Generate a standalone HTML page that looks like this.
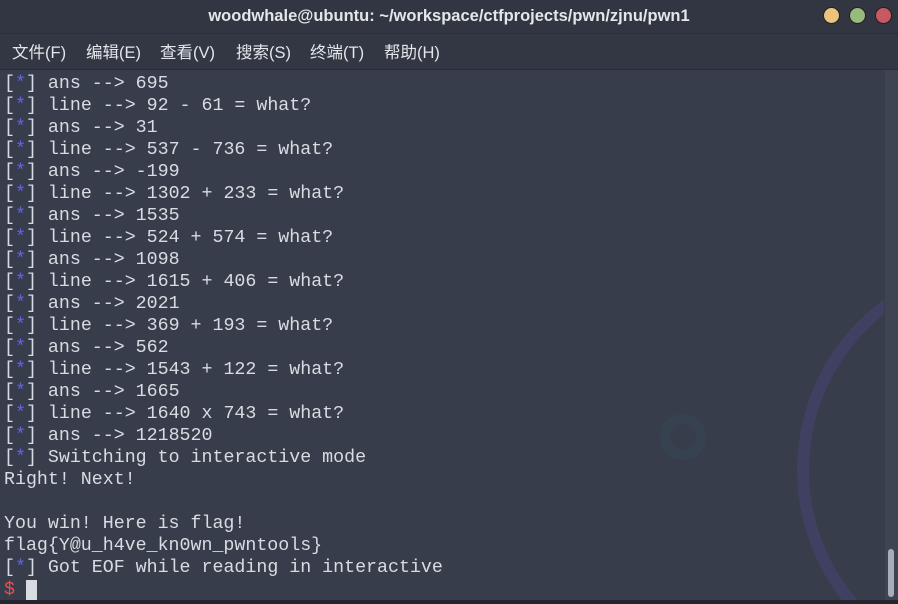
<!DOCTYPE html>
<html><head><meta charset="utf-8"><style>
body{margin:0;width:898px;height:604px;overflow:hidden;background:#383d4b;position:relative;font-family:"Liberation Sans","Noto Sans CJK SC",sans-serif}
#title{position:absolute;left:0;top:0;width:898px;height:33px;background:#313642;border-bottom:1px solid #2a2e38;color:#e3e6ea;font-weight:bold;font-size:16.5px;text-align:center;line-height:32px}
.dot{position:absolute;top:7px;width:15px;height:15px;border-radius:50%;border:1px solid #222}
#menu{position:absolute;left:0;top:34px;width:898px;height:35px;background:#323743;border-bottom:1px solid #2a2e38;color:#e3e6ea;font-size:16.5px;line-height:38px}
#menu span{position:absolute}
#term{position:absolute;left:0;top:70px;width:884px;height:530px;overflow:hidden}
pre{margin:0;position:absolute;left:4px;top:3px;font-family:"Liberation Mono",monospace;font-size:18.3px;line-height:22px;color:#d8dce2}
b{font-weight:normal;color:#6464f2}
.r{color:#ef4b4b}
#sb{position:absolute;left:885px;top:70px;width:13px;height:530px;background:#3f4453}
#thumb{position:absolute;left:888px;top:549px;width:6px;height:48px;border-radius:3px;background:#a7adb9}
#bot{position:absolute;left:0;top:600px;width:898px;height:4px;background:#23262e}
</style></head><body>
<div id="title">woodwhale@ubuntu: ~/workspace/ctfprojects/pwn/zjnu/pwn1</div>
<div class="dot" style="left:823px;background:#e9c57e"></div>
<div class="dot" style="left:849px;background:#98bb7c"></div>
<div class="dot" style="left:875px;background:#c65a62"></div>
<div id="menu"><span style="left:12px">文件(F)</span><span style="left:86px">编辑(E)</span><span style="left:160px">查看(V)</span><span style="left:236px">搜索(S)</span><span style="left:310px">终端(T)</span><span style="left:384px">帮助(H)</span></div>
<div id="term">
<svg width="884" height="530" style="position:absolute;left:0;top:0">
<circle cx="1008" cy="400" r="205" fill="none" stroke="#43426a" stroke-width="12" opacity="0.75"/>
<circle cx="683" cy="367" r="18" fill="none" stroke="#384452" stroke-width="10" opacity="0.7"/>
</svg>
<pre>[<b>*</b>] ans --&gt; 695
[<b>*</b>] line --&gt; 92 - 61 = what?
[<b>*</b>] ans --&gt; 31
[<b>*</b>] line --&gt; 537 - 736 = what?
[<b>*</b>] ans --&gt; -199
[<b>*</b>] line --&gt; 1302 + 233 = what?
[<b>*</b>] ans --&gt; 1535
[<b>*</b>] line --&gt; 524 + 574 = what?
[<b>*</b>] ans --&gt; 1098
[<b>*</b>] line --&gt; 1615 + 406 = what?
[<b>*</b>] ans --&gt; 2021
[<b>*</b>] line --&gt; 369 + 193 = what?
[<b>*</b>] ans --&gt; 562
[<b>*</b>] line --&gt; 1543 + 122 = what?
[<b>*</b>] ans --&gt; 1665
[<b>*</b>] line --&gt; 1640 x 743 = what?
[<b>*</b>] ans --&gt; 1218520
[<b>*</b>] Switching to interactive mode
Right! Next!

You win! Here is flag!
flag{Y@u_h4ve_kn0wn_pwntools}
[<b>*</b>] Got EOF while reading in interactive
<span class="r">$</span> <span style="background:#d8dce2">&nbsp;</span></pre>
</div>
<div id="sb"></div><div id="thumb"></div><div id="bot"></div>
</body></html>
